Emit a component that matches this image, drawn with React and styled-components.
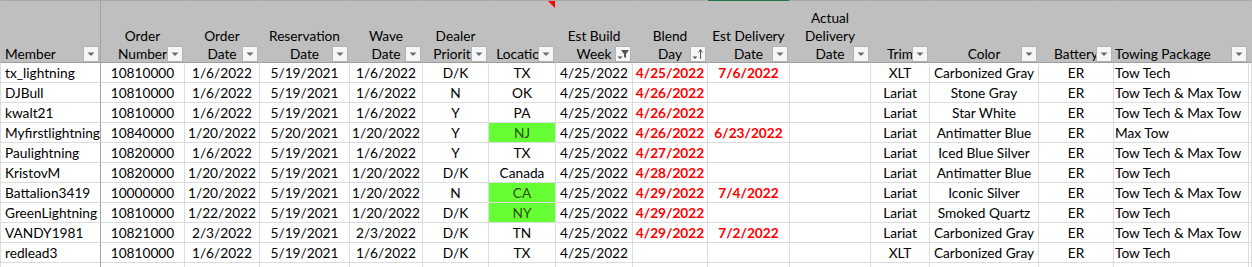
import React from 'react';
import styled, { createGlobalStyle } from 'styled-components';

const GlobalStyle = createGlobalStyle`
  html, body {
    margin: 0;
    padding: 0;
    background: #ffffff;
  }
  body {
    font-family: Lato, "Open Sans", sans-serif;
    font-size: 13.7px;
    color: #000;
    overflow: hidden;
  }
`;

const GRID = '#dadcdd';
const HEAD_BG = '#bfbfbf';

const columns = [
  { key: 'edge', label: [], width: 1, edge: true },
  { key: 'member', label: ['Member'], width: 100, align: 'left', pad: 4, freeze: true },
  { key: 'order', label: ['Order', 'Number'], width: 84 },
  { key: 'orderDate', label: ['Order', 'Date'], width: 75 },
  { key: 'resDate', label: ['Reservation', 'Date'], width: 90 },
  { key: 'waveDate', label: ['Wave', 'Date'], width: 73 },
  { key: 'priority', label: ['Dealer', 'Priority'], width: 66 },
  { key: 'location', label: ['Location'], width: 67, comment: true },
  { key: 'build', label: ['Est Build', 'Week'], width: 77, icon: 'filter' },
  { key: 'blend', label: ['Blend', 'Day'], width: 75, icon: 'sort', red: true },
  { key: 'delivery', label: ['Est Delivery', 'Date'], width: 82, red: true, selected: true },
  { key: 'actual', label: ['Actual', 'Delivery', 'Date'], width: 81 },
  { key: 'trim', label: ['Trim'], width: 59 },
  { key: 'color', label: ['Color'], width: 109 },
  { key: 'battery', label: ['Battery'], width: 75 },
  { key: 'towing', label: ['Towing Package'], width: 135, align: 'left', pad: 1 },
];

const template = columns.map((c) => `${c.width}px`).join(' ') + ' 1fr';

const rows = [
  ['tx_lightning', '10810000', '1/6/2022', '5/19/2021', '1/6/2022', 'D/K', 'TX', '4/25/2022', '4/25/2022', '7/6/2022', '', 'XLT', 'Carbonized Gray', 'ER', 'Tow Tech'],
  ['DJBull', '10810000', '1/6/2022', '5/19/2021', '1/6/2022', 'N', 'OK', '4/25/2022', '4/26/2022', '', '', 'Lariat', 'Stone Gray', 'ER', 'Tow Tech & Max Tow'],
  ['kwalt21', '10810000', '1/6/2022', '5/19/2021', '1/6/2022', 'Y', 'PA', '4/25/2022', '4/26/2022', '', '', 'Lariat', 'Star White', 'ER', 'Tow Tech & Max Tow'],
  ['Myfirstlightning', '10840000', '1/20/2022', '5/20/2021', '1/20/2022', 'Y', 'NJ', '4/25/2022', '4/26/2022', '6/23/2022', '', 'Lariat', 'Antimatter Blue', 'ER', 'Max Tow'],
  ['Paulightning', '10820000', '1/6/2022', '5/19/2021', '1/6/2022', 'Y', 'TX', '4/25/2022', '4/27/2022', '', '', 'Lariat', 'Iced Blue Silver', 'ER', 'Tow Tech & Max Tow'],
  ['KristovM', '10820000', '1/20/2022', '5/19/2021', '1/20/2022', 'D/K', 'Canada', '4/25/2022', '4/28/2022', '', '', 'Lariat', 'Antimatter Blue', 'ER', 'Tow Tech'],
  ['Battalion3419', '10000000', '1/20/2022', '5/19/2021', '1/20/2022', 'N', 'CA', '4/25/2022', '4/29/2022', '7/4/2022', '', 'Lariat', 'Iconic Silver', 'ER', 'Tow Tech & Max Tow'],
  ['GreenLightning', '10810000', '1/22/2022', '5/19/2021', '1/20/2022', 'D/K', 'NY', '4/25/2022', '4/29/2022', '', '', 'Lariat', 'Smoked Quartz', 'ER', 'Tow Tech'],
  ['VANDY1981', '10821000', '2/3/2022', '5/19/2021', '2/3/2022', 'D/K', 'TN', '4/25/2022', '4/29/2022', '7/2/2022', '', 'Lariat', 'Carbonized Gray', 'ER', 'Tow Tech & Max Tow'],
  ['redlead3', '10810000', '1/6/2022', '5/19/2021', '1/6/2022', 'D/K', 'TX', '4/25/2022', '', '', '', 'XLT', 'Carbonized Gray', 'ER', 'Tow Tech'],
  ['', '', '', '', '', '', '', '', '', '', '', '', '', '', ''],
];

const highlighted = ['NJ', 'CA', 'NY'];

const Sheet = styled.div`
  width: 1252px;
  height: 267px;
  overflow: hidden;
`;

const Row = styled.div`
  display: grid;
  grid-template-columns: ${template};
  height: ${(p) => (p.header ? '63px' : '20px')};
`;

const HeadCell = styled.div`
  position: relative;
  box-sizing: border-box;
  background: ${HEAD_BG};
  border-top: 1px solid ${(p) => (p.selected ? '#217346' : '#a9a9a9')};
  border-bottom: 1px solid #9e9e9e;
  border-right: 1px solid ${(p) => (p.freeze ? '#a3a3a3' : HEAD_BG)};
  display: flex;
  flex-direction: column;
  justify-content: flex-end;
  align-items: ${(p) => (p.align === 'left' ? 'flex-start' : 'center')};
  padding-left: ${(p) => p.pad || 0}px;
  overflow: hidden;
`;

const HeadText = styled.div`
  line-height: 20px;
  white-space: nowrap;
  margin-bottom: -2px;
  text-align: ${(p) => p.align || 'center'};
`;

const FilterButton = styled.div`
  position: absolute;
  right: 1px;
  bottom: 0;
  width: 16px;
  height: 16px;
  box-sizing: border-box;
  background: #f6f6f6;
  border: 1px solid #b3b3b3;
  display: flex;
  align-items: center;
  justify-content: center;
`;

const CommentMark = styled.div`
  position: absolute;
  top: 0;
  right: 0;
  width: 0;
  height: 0;
  border-top: 7px solid #ff0000;
  border-left: 7px solid transparent;
`;

const Cell = styled.div`
  box-sizing: border-box;
  border-right: 1px solid ${(p) => (p.freeze ? '#a3a3a3' : GRID)};
  border-bottom: 1px solid ${GRID};
  background: ${(p) => (p.green ? '#66ff33' : p.edge ? '#c6c6c6' : '#ffffff')};
  color: ${(p) => (p.red ? '#ff0000' : p.green ? '#2e4d17' : '#000')};
  font-weight: ${(p) => (p.red ? 700 : 400)};
  text-align: ${(p) => p.align || 'center'};
  padding-left: ${(p) => p.pad || 0}px;
  line-height: 19px;
  white-space: nowrap;
  overflow: hidden;
`;

const DropIcon = () => (
  <svg width="14" height="14" viewBox="0 0 14 14">
    <path d="M3.5 5.5 L10.5 5.5 L7 9 Z" fill="#6b6b6b" />
  </svg>
);

const FilterIcon = () => (
  <svg width="14" height="14" viewBox="0 0 14 14">
    <path d="M1.5 9.5 L6.5 9.5 L4 12 Z" fill="#555" />
    <path d="M5 3 L13 3 L10 7 L10 11 L8 10 L8 7 Z" fill="#555" />
  </svg>
);

const SortIcon = () => (
  <svg width="14" height="14" viewBox="0 0 14 14">
    <path d="M1.5 9.5 L6.5 9.5 L4 12 Z" fill="#555" />
    <path d="M9.5 12 L9.5 3" stroke="#555" strokeWidth="1" />
    <path d="M7.5 5.5 L9.5 2.5 L11.5 5.5" stroke="#555" strokeWidth="1" fill="none" />
  </svg>
);

function HeaderRow() {
  return (
    <Row header>
      {columns.map((c) => (
        <HeadCell key={c.key} align={c.align} pad={c.pad} freeze={c.freeze} selected={c.selected}>
          {c.label.map((line) => (
            <HeadText key={line}>{line}</HeadText>
          ))}
          {c.comment && <CommentMark />}
          {!c.edge && (
            <FilterButton>
              {c.icon === 'filter' ? <FilterIcon /> : c.icon === 'sort' ? <SortIcon /> : <DropIcon />}
            </FilterButton>
          )}
        </HeadCell>
      ))}
      <HeadCell />
    </Row>
  );
}

export default function App() {
  return (
    <Sheet>
      <GlobalStyle />
      <HeaderRow />
      {rows.map((r, i) => (
        <Row key={i}>
          <Cell edge />
          {r.map((value, j) => {
            const col = columns[j + 1];
            return (
              <Cell
                key={col.key}
                align={col.align}
                pad={col.pad}
                freeze={col.freeze}
                red={col.red}
                green={col.key === 'location' && highlighted.includes(value)}
              >
                {value}
              </Cell>
            );
          })}
          <Cell />
        </Row>
      ))}
    </Sheet>
  );
}
